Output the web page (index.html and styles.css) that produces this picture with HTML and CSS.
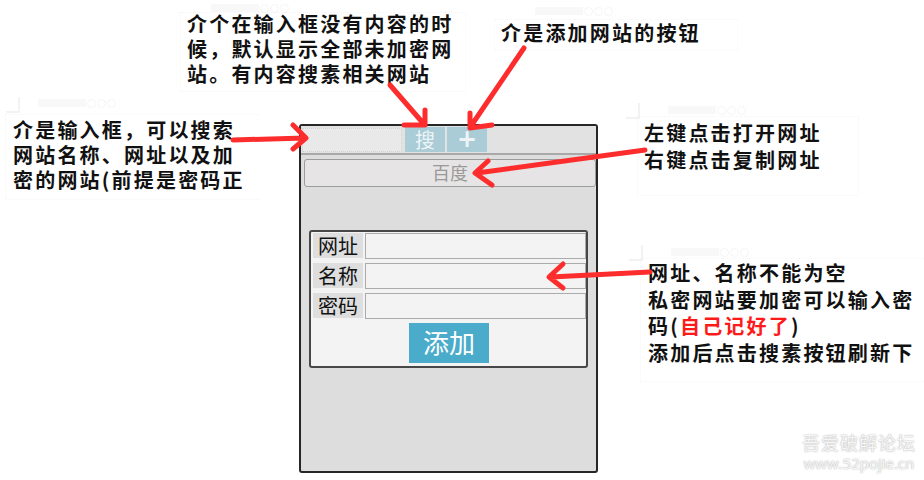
FILE: index.html
```html
<!DOCTYPE html>
<html lang="zh-CN">
<head>
<meta charset="utf-8">
<title>网站搜索</title>
<link rel="stylesheet" href="styles.css">
</head>
<body>
<div class="canvas">

  <div class="note note-a">
    <div class="ghost"><span class="ghost-bar"></span><span class="ghost-dot"></span><span class="ghost-dot"></span><span class="ghost-dot"></span></div>
    <div class="note-text">介个在输入框没有内容的时<br>候，默认显示全部未加密网<br>站。有内容搜素相关网站</div>
  </div>

  <div class="note note-b">
    <div class="note-text">介是输入框，可以搜索<br>网站名称、网址以及加<br>密的网站(前提是密码正</div>
  </div>
  <div class="ghost ghost-b"><span class="ghost-bar"></span><span class="ghost-dot"></span><span class="ghost-dot"></span><span class="ghost-dot"></span></div>
  <div class="corner corner-b"></div>

  <div class="note note-c">
    <div class="ghost"><span class="ghost-bar"></span><span class="ghost-dot"></span><span class="ghost-dot"></span><span class="ghost-dot"></span></div>
    <div class="note-text">介是添加网站的按钮</div>
  </div>

  <div class="note note-d">
    <div class="corner"></div>
    <div class="ghost"><span class="ghost-bar"></span><span class="ghost-dot"></span><span class="ghost-dot"></span><span class="ghost-dot"></span></div>
    <div class="note-text lh27">左键点击打开网址<br>右键点击复制网址</div>
  </div>

  <div class="note note-e">
    <div class="corner"></div>
    <div class="ghost"><span class="ghost-bar"></span><span class="ghost-dot"></span><span class="ghost-dot"></span><span class="ghost-dot"></span></div>
    <div class="note-text lh265">网址、名称不能为空<br>私密网站要加密可以输入密<br>码(<span class="red">自己记好了</span>)<br>添加后点击搜素按钮刷新下</div>
  </div>

  <div class="panel">
    <div class="topbar">
      <div class="search-input"></div>
      <div class="btn btn-search">搜</div>
      <div class="btn btn-plus">+</div>
    </div>
    <div class="site-item">百度</div>
    <div class="form">
      <div class="row"><div class="label">网址</div><div class="field"></div></div>
      <div class="row"><div class="label">名称</div><div class="field"></div></div>
      <div class="row"><div class="label">密码</div><div class="field"></div></div>
      <div class="add-wrap"><div class="add-btn">添加</div></div>
    </div>
  </div>

  <svg class="arrows" width="924" height="480" viewBox="0 0 924 480">
    <g fill="none" stroke="#fe2d2d" stroke-width="5" stroke-linecap="round" stroke-linejoin="round">
      <path d="M233 140 L305 138 M293 125 L306 138 L293 149"/>
      <path d="M390 85 L423 123 M404 125 L425 125 L425 110"/>
      <path d="M524 48 L471 126 M470 113 L470 128 L492 125"/>
      <path d="M645 150 L477 173 M488 161 L475 173 L492 185"/>
      <path d="M650 272 L551 277 M563 264 L549 277 L563 288"/>
    </g>
  </svg>

  <div class="watermark">
    <div class="wm-title">吾爱破解论坛</div>
    <div class="wm-url">www.52pojie.cn</div>
  </div>
</div>
</body>
</html>
```
FILE: styles.css
```css
html, body {
  margin: 0;
  padding: 0;
  background: #ffffff;
}

.canvas {
  position: relative;
  width: 924px;
  height: 480px;
  overflow: hidden;
  background: #ffffff;
  font-family: "Noto Sans CJK SC", "Noto Sans", sans-serif;
}

/* annotation notes */
.note {
  position: absolute;
  box-sizing: border-box;
  border: 1px dotted #f6f6f6;
}

.note-text {
  position: relative;
  font-family: "Noto Sans CJK SC", "Noto Sans CJK JP", sans-serif;
  font-weight: 700;
  font-size: 20px;
  letter-spacing: 2.2px;
  line-height: 25px;
  color: #111111;
  white-space: nowrap;
}

.lh27 { line-height: 27px; }
.lh265 { line-height: 26.5px; }

.red { color: #ff1a1a; }

.ghost {
  position: absolute;
  display: flex;
  align-items: center;
  gap: 1px;
  height: 10px;
  opacity: 0.4;
}

.ghost-bar {
  display: block;
  width: 48px;
  height: 8px;
  background: #eeeeee;
}

.ghost-dot {
  display: block;
  width: 7px;
  height: 7px;
  border: 1px solid #e8e8e8;
  border-radius: 50%;
}

.corner {
  position: absolute;
  width: 12px;
  height: 14px;
  border-right: 2px solid #f2f2f2;
  border-bottom: 2px solid #f2f2f2;
}

.note-a { left: 180px; top: 12px; width: 286px; height: 80px; }
.note-a .note-text { left: 6px; top: -2px; }
.note-a .ghost { left: 30px; top: -10px; }

.note-b { left: 5px; top: 114px; width: 254px; height: 86px; overflow: hidden; border-right: none; }
.note-b .note-text { left: 7px; top: 2px; }
.ghost-b { left: 38px; top: 98px; }
.corner-b { left: 6px; top: 97px; }

.note-c { left: 494px; top: 19px; width: 244px; height: 32px; }
.note-c .note-text { left: 6px; top: 0; }
.note-c .ghost { left: 40px; top: -14px; }

.note-d { left: 637px; top: 116px; width: 222px; height: 80px; }
.note-d .note-text { left: 6px; top: 2px; }
.note-d .corner { left: -12px; top: -14px; }
.note-d .ghost { left: 30px; top: -12px; }

.note-e { left: 640px; top: 258px; width: 284px; height: 124px; border-right: none; }
.note-e .note-text { left: 7px; top: 1px; }
.note-e .corner { left: -12px; top: -14px; }
.note-e .ghost { left: 30px; top: -12px; }

/* panel */
.panel {
  position: absolute;
  left: 299px;
  top: 124px;
  box-sizing: border-box;
  width: 299px;
  height: 349px;
  border: 2px solid #262626;
  border-radius: 3px;
  background: #dddddd;
  display: flex;
  flex-direction: column;
}

.topbar {
  box-sizing: border-box;
  height: 29px;
  padding: 0 0 1px 1px;
  display: flex;
  align-items: flex-end;
  background: #e2e2e2;
  border-bottom: 2px solid #a9a9a9;
}

.search-input {
  box-sizing: border-box;
  width: 100px;
  height: 24px;
  border: 1px dotted #d2d2d2;
  background: #e9e9e9;
}

.btn {
  box-sizing: border-box;
  width: 40px;
  height: 25px;
  background: #a9ccd6;
  color: #eef4f6;
  font-size: 20px;
  line-height: 25px;
  text-align: center;
}

.btn-search { margin-left: 3px; }
.btn-plus { margin-left: 2px; font-size: 24px; font-family: "DejaVu Sans", sans-serif; font-weight: 700; line-height: 25px; }

.site-item {
  box-sizing: border-box;
  margin: 4px 0 0 3px;
  height: 28px;
  border: 1px solid #9c9c9c;
  border-radius: 3px;
  background: #e6e4e4;
  color: #9a9a9a;
  font-size: 18px;
  line-height: 25px;
  text-align: center;
}

.form {
  box-sizing: border-box;
  margin: 43px 0 0 8px;
  width: 279px;
  height: 138px;
  border: 2px solid #474747;
  border-radius: 3px;
  background: #f3f3f3;
  padding: 1px 0 0 2px;
  display: flex;
  flex-direction: column;
  gap: 5px;
}

.row {
  display: flex;
  gap: 2px;
  height: 25px;
}

.label {
  width: 50px;
  height: 25px;
  background: #dedede;
  color: #111111;
  font-size: 20px;
  line-height: 25px;
  text-align: center;
}

.field {
  box-sizing: border-box;
  width: 221px;
  height: 26px;
  border: 1px solid #ababab;
  background: #f3f3f3;
}

.add-wrap {
  display: flex;
  justify-content: center;
  padding-right: 1px;
}

.add-btn {
  width: 80px;
  height: 40px;
  background: #4aabca;
  color: #ffffff;
  font-size: 26px;
  line-height: 38px;
  text-align: center;
}

/* arrows overlay */
.arrows {
  position: absolute;
  left: 0;
  top: 0;
  pointer-events: none;
}

/* watermark */
.watermark {
  position: absolute;
  left: 800px;
  top: 430px;
  width: 118px;
  color: #f6f6f6;
  text-shadow: 0 0 2px #b8b8b8, 0 0 1px #c8c8c8;
  text-align: center;
}

.wm-title {
  font-size: 18px;
  line-height: 24px;
  letter-spacing: 1px;
}

.wm-url {
  font-family: "Open Sans", "Noto Sans", sans-serif;
  font-size: 15px;
  line-height: 18px;
}
```
